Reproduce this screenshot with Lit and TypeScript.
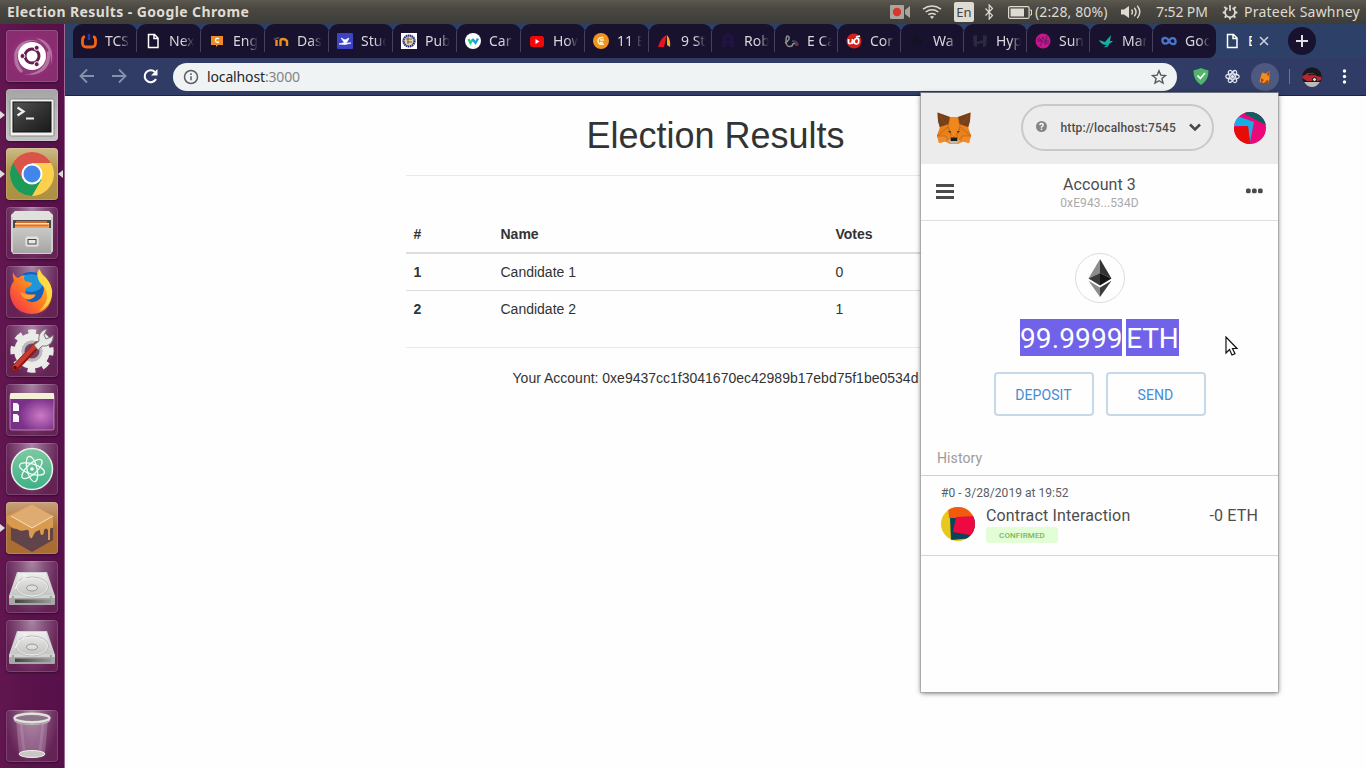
import { LitElement, html, css, svg, TemplateResult } from "lit";
import { customElement } from "lit/decorators.js";

type Art = TemplateResult;

/* Desktop panel ------------------------------------------------------- */

@customElement("top-panel")
class TopPanel extends LitElement {
  static styles = css`
    :host { display: flex; align-items: center; height: 24px; box-sizing: border-box; padding-left: 7px;
      background: linear-gradient(#5b584f, #4a4841 35%, #3d3c37); color: #dfdbd2;
      font: 14px/24px "Noto Sans", sans-serif; white-space: nowrap; }
    .title { font-weight: 700; font-size: 14px; letter-spacing: 0.4px; width: 883px; }
    svg { display: block; flex: none; }
    .lang { width: 20px; height: 20px; margin: 0 10px 0 12px; border-radius: 2px; background: #dfdbd2;
      color: #45433d; text-align: center; font-size: 13px; line-height: 20px; flex: none; }
    .wifi { margin-left: 12px; }
    .battery { margin-left: 13px; }
    .charge { width: 73px; margin: 0 13px 0 3px; letter-spacing: 0.12px; }
    .clock { width: 53px; margin: 0 13px 0 14px; letter-spacing: -0.12px; }
    .user { margin-left: 6px; letter-spacing: 0.23px; }
  `;
  render() {
    return html`
      <span class="title">Election Results - Google Chrome</span>
      <svg width="20" height="14" viewBox="0 0 20 14"><path d="M1 0h12a1 1 0 0 1 1 1v12a1 1 0 0 1-1 1H1a1 1 0 0 1-1-1V1a1 1 0 0 1 1-1zM15 5l5-4v12l-5-4z" fill="#a9a69f"/><circle cx="7" cy="7" r="4.2" fill="#d9352b"/></svg>
      <svg class="wifi" width="20" height="14" viewBox="0 0 20 14" fill="none" stroke="#dfdbd2" stroke-width="1.5"><path d="M1 4.2q9-6.6 18 0M3.6 7q6.400-4.600 12.800 0M6.300 9.700q3.700-2.600 7.400 0"/><path d="M10 14l-2-2.300q2-1.200 4 0z" fill="#dfdbd2" stroke="none"/></svg>
      <span class="lang">En</span>
      <svg width="11" height="16" viewBox="0 0 11 16" fill="none" stroke="#dfdbd2" stroke-width="1.200"><path d="M1.500 4.500l7 7L5.200 15V1l3.300 3.500-7 7"/></svg>
      <svg class="battery" width="24" height="13" viewBox="0 0 24 13"><rect x=".6" y=".6" width="20.500" height="11.800" rx="1.500" fill="none" stroke="#dfdbd2" stroke-width="1.200"/><path d="M2.500 2.500H16v8H2.500z" fill="#dfdbd2"/><path d="M22 4h1.500v5H22" fill="none" stroke="#dfdbd2"/></svg>
      <span class="charge">(2:28, 80%)</span>
      <svg width="21" height="14" viewBox="0 0 21 14"><path d="M0 4.500h3L8 1v12L3 9.500H0z" fill="#dfdbd2"/><path d="M10.500 4.500q2 2.500 0 5M13.300 2.700q3.500 4.300 0 8.600M16.300.800q5 6.200 0 12.400" fill="none" stroke="#dfdbd2" stroke-width="1.400"/></svg>
      <span class="clock">7:52 PM</span>
      <svg width="16" height="16" viewBox="0 0 16 16" fill="none" stroke="#dfdbd2"><path d="M5.500 4a5 5 0 1 0 5 0" stroke-width="1.700"/><path d="M8 1v6" stroke-width="1.700"/><path d="M4 4.500L2.300 2.800M12 4.500l1.700-1.700M3.200 8.500H.700M12.800 8.500h2.500M4.300 12l-1.600 1.600M11.700 12l1.600 1.600M8 13v2.500" stroke-width="1.900"/></svg>
      <span class="user">Prateek Sawhney</span>`;
  }
}

/* Launcher ------------------------------------------------------------ */

const drive: Art = svg`
  <path d="M11 11h30l8 24v2H3v-2z" fill="#d2d2d2"/><path d="M12 12h28l7 22H5z" fill="url(#silver)"/>
  <ellipse cx="26" cy="26" rx="16.500" ry="10" fill="none" stroke="#bbb"/><ellipse cx="26" cy="26" rx="15.500" ry="9" fill="none" stroke="#f3f3f3" stroke-width=".7"/>
  <ellipse cx="26" cy="27" rx="5.500" ry="3" fill="#ddd" stroke="#999"/><path d="M17 14l4 1-5 4M13 20l-4 8" fill="none" stroke="#f8f8f8"/>
  <path d="M3 37h46v6q0 1-1 1H4q-1 0-1-1z" fill="#a7a7a5"/><path d="M9 38.500h36V42H9z" fill="url(#slot)"/><circle cx="7" cy="36" r=".8" fill="#666"/><circle cx="45" cy="36" r=".8" fill="#666"/>`;

interface Tile { kind: string; running?: boolean; focused?: boolean; art: Art; }

const tiles: Tile[] = [
  { kind: "dash", art: svg`
    <path d="M8 26C9 12 24 5 38 14 28 8 16 11 12 24zM43 20c5 16-8 28-25 24 14 1 24-9 23-22zM15 43C4 33 8 19 17 12c-7 9-8 20 0 29zM30 8c14 2 19 14 15 27 1-12-4-21-15-27z" fill="#fff" fill-opacity=".32"/>
    <circle cx="26" cy="26" r="14" fill="#fff"/><circle cx="26" cy="26" r="7" fill="none" stroke="#6b1b50" stroke-width="3"/>
    <g stroke="#fff" stroke-width="1"><circle cx="16.500" cy="26" r="2.500" fill="#6b1b50"/><circle cx="30.700" cy="17.800" r="2.500" fill="#6b1b50"/><circle cx="30.700" cy="34.200" r="2.500" fill="#6b1b50"/></g>` },
  { kind: "silver", running: true, art: svg`
    <rect x="4" y="10" width="44" height="37" rx="1.500" fill="#f1f1ef" stroke="#888"/><rect x="7" y="13" width="38" height="30" fill="url(#screen)" stroke="#111"/>
    <path d="M11.500 18.500l6 4-6 4" fill="none" stroke="#eee" stroke-width="2.300"/><path d="M20 29.500h8" stroke="#eee" stroke-width="2"/>` },
  { kind: "gold", running: true, focused: true, art: svg`
    <circle cx="26" cy="26" r="22" fill="#fcd04b"/><path d="M6.950 15A22 22 0 0 0 26 48L35.500 31.500 26 26z" fill="#1c9a5a"/>
    <path d="M6.950 15A22 22 0 0 1 45.050 15H26V26l-9.500 5.500z" fill="#d9554a"/><circle cx="26" cy="26" r="10.500" fill="#fff"/><circle cx="26" cy="26" r="8.500" fill="#4286ea"/>` },
  { kind: "plain", art: svg`
    <path d="M9 4h34l4 4v8H5V8z" fill="#e0e0de"/><path d="M7 13h38v8H7z" fill="#4b4b49"/>
    <path d="M10 14h31v2H10z" fill="#d16a2e"/><path d="M9 16h34v5H9z" fill="#f0a25e"/><path d="M9 16.500h34" stroke="#fbe3c4"/><path d="M9 18.700h33" stroke="#dc6f2c" stroke-width="1.200"/>
    <path d="M5 10h2v11h38V10h2v34l-2 3H7l-2-3z" fill="#cfcfcd"/><path d="M7 21h38v25H7z" fill="url(#front)"/><rect x="19.500" y="29.500" width="13" height="10" rx="2" fill="#e3e3e1" stroke="#cfcfcd"/><rect x="22" y="32.500" width="8" height="4.500" fill="#e9e9e9" stroke="#444"/>` },
  { kind: "plain", art: svg`
    <circle cx="25" cy="24" r="18" fill="#1560bd"/><ellipse cx="25" cy="17" rx="12" ry="9" fill="#1f95dc"/>
    <path d="M7 6q1 4 5 6 3-3 7-3-2 3 0 6l7 2q0 3-6 5-2 4 1 6 4 1 7 0 3 1 0 3-4 4-9 2 5 5 12 2 6-3 7-12-1-6-5-9-4-5 0-11 2 5 7 9 7 8 6 17Q44 47 26 48 6 47 4 27 4 19 8 15 6 10 7 6z" fill="url(#fire)"/>
    <path d="M33 3q2 5 7 9 7 8 6 17-2 12-13 16 9-8 8-16-1-7-5-10-6-5-3-16z" fill="#ffdf45" opacity=".9"/><path d="M14 26q4 3 13 3 3 1 0 3-5 3-10-1z" fill="#ffb637" opacity=".7"/>` },
  { kind: "plain", art: svg`
    <circle cx="26" cy="26" r="18.700" fill="none" stroke="#e8e8e6" stroke-width="6" stroke-dasharray="7.500 7.190" transform="rotate(-101 26 26)"/>
    <circle cx="26" cy="26" r="14" fill="none" stroke="#ebebe9" stroke-width="7.500"/>
    <circle cx="26" cy="26" r="10.500" fill="#bdb9bb"/><circle cx="26" cy="26" r="7.500" fill="#724465"/>
    <path d="M9 43L31 20" stroke="#8f1712" stroke-width="7" stroke-linecap="round"/><path d="M8.700 42.300L30.500 19.500" stroke="#c93a32" stroke-width="4.500" stroke-linecap="round"/>
    <path d="M28 20l5-4c-1-6 2-11 8-12l-3 6 2 4 5-2 2-2c1 7-4 12-11 11l-4 4z" fill="#e7e7e5" stroke="#777"/><circle cx="9" cy="42.500" r="1.800" fill="#5c0c08"/>` },
  { kind: "plain", art: svg`
    <rect x="4" y="10" width="44" height="36" rx="2" fill="url(#desk)" stroke="#d9a5d6" stroke-width=".7"/><path d="M5 9h42q1 0 1 1v5H4v-5z" fill="#f2f0d6"/>
    <path d="M7 19h4l2 2v6H7zM7 30h4l2 2v6H7z" fill="#f6f6f6"/>` },
  { kind: "plain", art: svg`
    <circle cx="26" cy="26" r="20.500" fill="url(#atom)" stroke="#e6f2eb" stroke-width="1.500"/>
    <g fill="none" stroke="#effff7" stroke-width="1.300"><ellipse cx="26" cy="26" rx="13" ry="5" transform="rotate(17 26 26)"/><ellipse cx="26" cy="26" rx="13" ry="5" transform="rotate(77 26 26)"/><ellipse cx="26" cy="26" rx="13" ry="5" transform="rotate(137 26 26)"/></g><circle cx="26" cy="26" r="1.800" fill="#fff"/>` },
  { kind: "copper", running: true, art: svg`
    <path d="M26 2l21 12v24L26 50 5 38V14z" fill="#61444a"/><path d="M26 2l21 12v12q-3-1-3 2v10h-2V28q-2-3-4 0 0 5-2 5t-2-5q-5 1-6 4l-2 4q-3 1-3-5 0-4-3-3-6 2-9-1-4 0-6-2l-4-4V14z" fill="#d99a50"/>
    <path d="M26 2l21 12-21 12L5 14z" fill="#deac70"/><path d="M5 14l21 12 21-12" fill="none" stroke="#fae0ba"/>` },
  { kind: "plain", art: drive },
  { kind: "plain", art: drive },
  { kind: "plain trash", art: svg`
    <path d="M10 9l3 34q13 6 26 0l3-34z" fill="#c9a8c4" fill-opacity=".35"/><path d="M15 14l3 28M37 14l-3 28" stroke="#fff" stroke-opacity=".12" stroke-width="3"/>
    <ellipse cx="26" cy="44" rx="13" ry="3.500" fill="#c9c6c4" stroke="#eee"/>
    <path d="M8 8q0 6 18 6t18-6v3q-3 4-18 4T8 11z" fill="#b9b9b2"/><ellipse cx="26" cy="8" rx="17.500" ry="4.200" fill="#8d7489" stroke="#e2e1dc" stroke-width="2.500"/>` },
];

@customElement("side-launcher")
class SideLauncher extends LitElement {
  static styles = css`
    :host { display: flex; flex-direction: column; gap: 7px; width: 65px; height: 744px; box-sizing: border-box; padding: 6px 0 6px 0;
      background: linear-gradient(90deg, #611650, #5a124a 45%, #57104a); border-right: 1px solid #9d6a94; flex: none; }
    .defs { position: absolute; }
    .slot { display: flex; align-items: center; height: 52px; }
    .slot:last-child { margin-top: auto; }
    .left, .right { width: 6px; flex: none; display: flex; }
    .left i, .right i { width: 0; height: 0; border: 4px solid transparent; }
    .left i { border-left: 5px solid #ddd; border-right: 0; }
    .right i { border-right: 5px solid #ddd; border-left: 0; }
    .tile { width: 52px; height: 52px; border-radius: 4px; box-shadow: inset 0 0 0 1px #ffffff28, 0 1px 2px #0006; flex: none; }
    .tile svg { display: block; }
    .plain { background: radial-gradient(ellipse at 50% 0, #a986a4 0, #84517c 35%, transparent 75%), #652255; }
    .dash { background: radial-gradient(circle, #9d4b86, #8c2c72 60%, #82306d); }
    .silver { background: linear-gradient(#a4a4a4, #b9b9b9 50%, #c2c2c2); }
    .gold { background: linear-gradient(#cdbb87, #b1964c 40%, #ad9142); }
    .copper { background: linear-gradient(#c9a17c, #aa6e33 50%, #a96c33); }
  `;
  render() {
    return html`
      <svg class="defs" width="0" height="0"><defs>
        <linearGradient id="silver" x2="0" y2="1"><stop stop-color="#eee"/><stop offset="1" stop-color="#c5c5c3"/></linearGradient>
        <linearGradient id="front" x2="0" y2="1"><stop stop-color="#c9c9c7"/><stop offset="1" stop-color="#a5a5a3"/></linearGradient>
        <linearGradient id="slot"><stop stop-color="#444"/><stop offset="1" stop-color="#999"/></linearGradient>
        <linearGradient id="screen" x2="1" y2="1"><stop stop-color="#555"/><stop offset=".5" stop-color="#333"/><stop offset="1" stop-color="#191919"/></linearGradient>
        <linearGradient id="fire" x1="1" y1="0" x2="0" y2="1"><stop stop-color="#ffdc3d"/><stop offset=".5" stop-color="#ff8022"/><stop offset="1" stop-color="#f12651"/></linearGradient>
        <radialGradient id="desk" cx=".7" cy=".6"><stop stop-color="#cc7ac5"/><stop offset="1" stop-color="#793089"/></radialGradient>
        <linearGradient id="atom" x2="0" y2="1"><stop stop-color="#7fc9a0"/><stop offset="1" stop-color="#3fb087"/></linearGradient>
      </defs></svg>
      ${tiles.map((t) => html`<div class="slot">
        <span class="left">${t.running ? html`<i></i>` : ""}</span>
        <div class="tile ${t.kind}"><svg width="52" height="52" viewBox="0 0 52 52">${t.art}</svg></div>
        <span class="right">${t.focused ? html`<i></i>` : ""}</span>
      </div>`)}`;
  }
}

/* Browser tabs -------------------------------------------------------- */

const sheet: Art = svg`<path d="M3.500 1.500h6l3.500 3.500v9.500H3.500zM9 1.500V5.500h4" fill="none" stroke="#fff" stroke-width="1.500"/>`;

const tabs: { title: string; icon: Art }[] = [
  { title: "TCS", icon: svg`<path d="M4 3.500Q1.500 4 1.500 7v3q0 4 4 4h5q4 0 4-4V7q0-3-2.500-3.500" fill="none" stroke="#f26417" stroke-width="2.800"/><path d="M8 1v6" stroke="#2e369c" stroke-width="2.500"/>` },
  { title: "Next", icon: sheet },
  { title: "Eng", icon: svg`<path d="M2 3h12v9H9l-2 2v-2H2z" fill="#ef8b22"/><path d="M10 5.700q-3.500-1-3.500 1.600T10 9" fill="none" stroke="#fff" stroke-width="1.300"/>` },
  { title: "Das", icon: svg`<path d="M0 6l5-2 2 1-5 2z" fill="#555"/><path d="M3.500 7v6M7.500 13V8q0-2 2.500-2t4 2v5" fill="none" stroke="#ef8c22" stroke-width="2.400"/>` },
  { title: "Stud", icon: svg`<rect width="16" height="16" rx="1" fill="#3e42c4"/><path d="M7 9L4 5l4 2 4-2-2 4-3 1zM2 11l4-1h3l5 0-6 1.500z" stroke="#fff" stroke-width=".7" fill="#fff"/>` },
  { title: "Pub", icon: svg`<path d="M0 0h16v16H0z" fill="#fff"/><circle cx="8" cy="8" r="5.500" fill="#e3cfae" stroke="#272f74" stroke-width="2.200" stroke-dasharray="1.500 .5"/><path d="M5 6h6M6 9h5M7 4v7" stroke="#6c654d"/>` },
  { title: "Car", icon: svg`<circle cx="8" cy="8" r="8" fill="#fff"/><path d="M3.500 6l2 4L8 6" stroke="#1bd38d" stroke-width="2.300" fill="none"/><path d="M7.500 6l3 4 2.500-4.500" stroke="#16a1dc" stroke-width="2.300" fill="none"/>` },
  { title: "How", icon: svg`<rect x="1" y="3" width="14" height="11" rx="2.500" fill="#f20808"/><path d="M6.500 6l4 2.500-4 2.500z" fill="#fff"/>` },
  { title: "11 E", icon: svg`<circle cx="8" cy="8" r="8" fill="#f09420"/><path d="M10.500 4.500Q5 4 5 8t6 3M7 7h4M7 9.500h3" fill="none" stroke="#fff1c0" stroke-width="1.500"/>` },
  { title: "9 St", icon: svg`<path d="M1 14Q4 4 10 2L7 14z" fill="#e51420"/><path d="M10 2q4 5 3 12l-3-2z" fill="#f5ae22"/>` },
  { title: "Rob", icon: svg`<path d="M4 14V5q4-6 8 0v9M4 9h8" stroke="#211347" stroke-width="3" fill="none"/>` },
  { title: "E Ca", icon: svg`<path d="M2 10q5-3 4-6Q3 1 3 8t6 5q1-4 5-2" fill="none" stroke="#8d918f" stroke-width="1.500"/><path d="M9 8q5 0 6 4" fill="none" stroke="#40434e" stroke-width="2"/><path d="M12 10l3 0v3h-3z" fill="#a21642"/>` },
  { title: "Cor", icon: svg`<circle cx="8" cy="8" r="7.500" fill="#d42119"/><path d="M2.500 6v3q0 2 2 1.500 2 0 2-4.500v5M8 8q2-4 4.500-2 1 5-2 5Q8 11 8 8zM10 4l4-1" fill="none" stroke="#fff" stroke-width="1.700"/>` },
  { title: "Wa", icon: svg`<path d="M8 2v12M2 8h12M4 4l8 8M12 4l-8 8" stroke="#111324" stroke-width="1.800"/>` },
  { title: "Hyp", icon: svg`<path d="M1 3l4-1v12l-3-1zM15 3l-4-1v12l3-1zM5 9l6-2v3l-6 1z" fill="#2b2b3e"/>` },
  { title: "Sun", icon: svg`<circle cx="8" cy="8" r="7.500" fill="#c5178d"/><path d="M2 8h4l2-4 2 4h4M4 4l3 5-2 4M12 3l-2 9M2 6l12 5" fill="none" stroke="#65175f" stroke-width=".9"/>` },
  { title: "Mar", icon: svg`<path d="M1 7l6 2 6-7-1 6h3q-2 2-4 3-1 4-5 3l3-2Q3 12 1 7z" fill="#16aea4"/>` },
  { title: "Goo", icon: svg`<path d="M8 8C5 3 1 5 1.500 8S6 12 8 8s6-3.500 6.500 0S11 13 8 8z" fill="none" stroke="#4877c9" stroke-width="2.300"/>` },
];

@customElement("browser-tabs")
class BrowserTabs extends LitElement {
  static styles = css`
    :host { display: flex; height: 34px; box-sizing: border-box; padding-left: 8px; background: #2c4068;
      font: 14px/34px "Noto Sans", sans-serif; color: #d8d7dc; }
    .strip { display: grid; grid-template-columns: repeat(9, 64px) repeat(9, 63px); width: 1143px; flex: none; }
    .tab { display: flex; align-items: center; min-width: 0; height: 34px; box-sizing: border-box; padding-left: 8px; background: #19122f; border-radius: 9px 9px 0 0; }
    .tab:last-child { border-radius: 9px 9px 8px 0; }
    .tab:not(:last-child)::after { content: ""; width: 1px; height: 21px; margin-left: auto; background: #45415a; }
    .tab svg, .active svg { flex: none; display: block; }
    .tab span { width: 25px; margin-left: 8px; overflow: hidden; white-space: nowrap; letter-spacing: 0;
      -webkit-mask-image: linear-gradient(90deg, #000 55%, transparent); mask-image: linear-gradient(90deg, #000 55%, transparent); }
    .active { display: flex; align-items: center; width: 72px; box-sizing: border-box; padding-left: 8px; color: #fff; }
    .active b { font-weight: 400; width: 4px; margin: 0 6px 0 8px; overflow: hidden; }
    .plus { width: 28px; height: 28px; margin-top: 3px; border-radius: 50%; background: #19122f; }
  `;
  render() {
    return html`
      <div class="strip">${tabs.map((t) => html`<div class="tab"><svg width="16" height="16" viewBox="0 0 16 16">${t.icon}</svg><span>${t.title}</span></div>`)}</div>
      <div class="active"><svg width="16" height="16" viewBox="0 0 16 16">${sheet}</svg><b>E</b>
        <svg width="12" height="12" viewBox="0 0 12 12"><path d="M2 2l8 8M10 2l-8 8" stroke="#ccd1df" stroke-width="1.600"/></svg></div>
      <svg class="plus" viewBox="0 0 28 28"><path d="M14 8v12M8 14h12" stroke="#e0e0e4" stroke-width="2"/></svg>`;
  }
}

@customElement("browser-toolbar")
class BrowserToolbar extends LitElement {
  static styles = css`
    :host { display: flex; align-items: center; height: 38px; box-sizing: border-box; padding-left: 13px; background: #303c65; border-bottom: 1px solid #1c2548; }
    svg { display: block; flex: none; }
    .fwd { margin-left: 14px; }
    .reload { margin-left: 13px; }
    .omni { display: flex; align-items: center; width: 1004px; height: 28px; margin-left: 13px; box-sizing: border-box; padding: 0 10px; border-radius: 14px;
      background: #f0f3f3; font: 14px/28px "Noto Sans", sans-serif; color: #24262a; letter-spacing: -0.14px; }
    .omni span { margin: 0 auto 0 8px; }
    .omni i { font-style: normal; color: #80858b; }
    .shield { margin-left: 16px; }
    .atom { margin-left: 16px; }
    .fox { margin-left: 11px; }
    .rule { width: 1px; height: 15px; margin: 0 12px 0 10px; background: #6d7595; }
    .menu { margin-left: 20px; }
  `;
  render() {
    return html`
      <svg width="18" height="18" viewBox="0 0 18 18" fill="none" stroke="#8791ab" stroke-width="1.800"><path d="M16 8H3M9 1.500L2.500 8 9 14.500"/></svg>
      <svg class="fwd" width="18" height="18" viewBox="0 0 18 18" fill="none" stroke="#8791ab" stroke-width="1.800"><path d="M2 8h13M9 1.500L15.500 8 9 14.500"/></svg>
      <svg class="reload" width="19" height="18" viewBox="0 0 19 18"><path d="M15 11A6 6 0 1 1 14 4" fill="none" stroke="#fff" stroke-width="2.100"/><path d="M16.500 1v6.500H10z" fill="#fff"/></svg>
      <div class="omni">
        <svg width="16" height="16" viewBox="0 0 16 16" fill="none" stroke="#5a5e63" stroke-width="1.500"><circle cx="8" cy="8" r="6.500"/><path d="M8 7.200v4M8 4.300v1.600"/></svg>
        <span>localhost<i>:3000</i></span>
        <svg width="16" height="16" viewBox="0 0 16 16"><path d="M8 1.800l1.800 4.300 4.700.400-3.600 3 1.100 4.600L8 11.700l-4 2.400 1.100-4.600-3.600-3 4.700-.400z" fill="none" stroke="#55595e" stroke-width="1.400"/></svg>
      </div>
      <svg class="shield" width="16" height="17" viewBox="0 0 16 17"><path d="M8 0q4 2 7.500 2.200Q16 12 8 17 0 12 .500 2.200 4 2 8 0z" fill="#50b46c"/><path d="M4.500 7.500L7.300 10.500 12 5" fill="none" stroke="#fff" stroke-width="1.800"/></svg>
      <svg class="atom" width="15" height="15" viewBox="0 0 15 15" fill="none" stroke="#e4e9f1" stroke-width="1.200"><ellipse cx="7.500" cy="7.500" rx="6.700" ry="2.600"/><ellipse cx="7.500" cy="7.500" rx="6.700" ry="2.600" transform="rotate(60 7.500 7.500)"/><ellipse cx="7.500" cy="7.500" rx="6.700" ry="2.600" transform="rotate(120 7.500 7.500)"/><circle cx="7.500" cy="7.500" r="1" fill="#fff"/></svg>
      <svg class="fox" width="28" height="28" viewBox="0 0 28 28"><circle cx="14" cy="14" r="14" fill="#4e5980"/><path d="M18.500 8l-4 2.500-3.500-1-1.500 5L8.500 19l4 1h5l1-4z" fill="#f28b20"/><path d="M18.500 8.500l-3 2 2 3zM10 15l3 2-3 3zM16 17l2 1-1 2h-4z" fill="#a14b1a"/></svg>
      <span class="rule"></span>
      <svg width="20" height="20" viewBox="0 0 20 20"><circle cx="10" cy="10" r="9.800" fill="#17191d"/><path d="M2 15h16q-3 5-8 5t-8-5z" fill="#b8babb"/><path d="M.500 9q3-1 5-3h6l3 3 5 1-.500 3-3 1H5L.300 11z" fill="#ba2732"/><path d="M6 7.500h7" stroke="#421017" stroke-width="1.500"/><circle cx="12.500" cy="12.500" r="2" fill="#ddd" stroke="#111"/></svg>
      <svg class="menu" width="5" height="15" viewBox="0 0 5 15" fill="#fff"><circle cx="2.500" cy="2" r="1.700"/><circle cx="2.500" cy="7.500" r="1.700"/><circle cx="2.500" cy="13" r="1.700"/></svg>`;
  }
}

/* Page content -------------------------------------------------------- */

const candidates = [
  { id: 1, name: "Candidate 1", votes: 0 },
  { id: 2, name: "Candidate 2", votes: 1 },
];

@customElement("election-page")
class ElectionPage extends LitElement {
  static styles = css`
    :host { display: flow-root; width: 620px; margin-left: 340.5px; font: 14px/20px "Liberation Sans", Arial, sans-serif; color: #333; }
    h1 { margin: 20px 0 0; font-size: 36px; line-height: 39px; text-align: center; font-weight: 400; }
    hr { margin: 20px 0; border: 0; border-top: 1px solid #e9e9e9; }
    table { width: 620px; margin: 40px 0 20px; border-collapse: collapse; table-layout: fixed; }
    th, td { padding: 8px; text-align: left; border-top: 1px solid #ddd; line-height: 20px; }
    thead th { border-top: 0; border-bottom: 2px solid #ddd; }
    .id { width: 71px; }
    .name { width: 319px; }
    p { margin: 0; text-align: center; }
  `;
  render() {
    return html`
      <h1>Election Results</h1><hr />
      <table>
        <thead><tr><th class="id">#</th><th class="name">Name</th><th>Votes</th></tr></thead>
        <tbody>${candidates.map((c) => html`<tr><th>${c.id}</th><td>${c.name}</td><td>${c.votes}</td></tr>`)}</tbody>
      </table>
      <hr /><p>Your Account: 0xe9437cc1f3041670ec42989b17ebd75f1be0534d</p>`;
  }
}

/* Wallet popup -------------------------------------------------------- */

@customElement("wallet-popup")
class WalletPopup extends LitElement {
  static styles = css`
    :host { display: block; width: 357px; height: 599px; background: #fefefe; box-shadow: 0 0 0 1px #9f9f9f99, 0 1px 5px #0009; font-family: Roboto, sans-serif; color: #4d4d4d; }
    svg { display: block; flex: none; }
    header { display: flex; align-items: center; height: 71px; box-sizing: border-box; padding: 0 12px 2px 16px; background: #ececec; }
    .net { display: flex; align-items: center; width: 193px; height: 47px; margin: 0 20px 0 50px; box-sizing: border-box; padding: 0 11px 0 13px; border: 2px solid #c9c9c9; border-radius: 24px; font-size: 12px; font-weight: 500; white-space: nowrap; }
    .net svg { margin-bottom: 2px; }
    .net span { margin: 0 auto 0 13.500px; padding-top: 1px; letter-spacing: .15px; }
    .bar { display: flex; align-items: center; justify-content: space-between; height: 57px; box-sizing: border-box; padding: 0 15px 0 15px; border-bottom: 1px solid #dedede; }
    .bar svg { margin-bottom: 2px; }
    .who { text-align: center; font-size: 16px; line-height: 20px; padding-top: 1px; letter-spacing: .08px; }
    .who small { display: block; font-size: 12px; line-height: 16px; color: #aaa; }
    .balance { display: flex; flex-direction: column; align-items: center; padding-top: 32px; }
    .eth { width: 50px; height: 50px; box-sizing: border-box; border: 1px solid #ddd; border-radius: 50%; display: grid; place-items: center; }
    .amount { display: flex; gap: 4px; margin: 16px 0 16px; font-size: 28px; line-height: 39px; height: 37px; color: #fff; }
    .amount span { height: 37px; background: #7063ea; text-align: center; white-space: nowrap; }
    .num { width: 102px; letter-spacing: .12px; }
    .unit { width: 53px; letter-spacing: -.2px; }
    .actions { display: flex; gap: 12px; }
    .actions button { width: 100px; height: 44px; padding: 1px 0 0; border: 2px solid #c5d9e9; border-radius: 4px; background: #fefefe; color: #458bd8; font: 14px/40px Roboto, sans-serif; letter-spacing: .08px; }
    h2 { margin: 33px 0 0; padding: 0 16px; height: 26px; font-size: 14px; font-weight: 400; line-height: 18px; color: #9b9b9b; border-bottom: 1px solid #d0d0d0; letter-spacing: .1px; }
    .tx { height: 79px; padding: 0 20px; border-bottom: 1px solid #d6d6d6; }
    .when { padding-top: 9px; font-size: 12px; line-height: 16px; color: #5b5d67; letter-spacing: .03px; }
    .row { display: flex; padding-top: 5px; font-size: 16px; line-height: 20px; letter-spacing: .16px; }
    .row svg { margin: 1px 11px 0 0; }
    .amt { margin-left: auto; }
    .badge { width: 72px; height: 16px; margin-top: 1px; border-radius: 3px; background: #e3fdd6; color: #78b75b; font-size: 8px; font-weight: 500; line-height: 17px; text-align: center; letter-spacing: .1px; }
  `;
  render() {
    return html`
      <header>
        <svg width="34" height="32" viewBox="0 0 34 32">
          <path d="M.500.500L13 5h8L33.500.500 33 9l-2 7 3 7-2 8-6-1.500-5 2.500h-8l-5-2.500L2 31l-2-8 3-7L1 9z" fill="#f0881c"/>
          <path d="M.500.500L13 5l-2 10-8 1L1 9zM33.500.500L21 5l2 10 8 1 2-7z" fill="#76401b"/><path d="M3 4l8 11M31 4l-8 11" stroke="#945123" stroke-width=".6"/>
          <path d="M3 15l9-3 2 10-5 2-9 1zM31 15l-9-3-2 10 5 2 9 1z" fill="#e8811b"/><path d="M0 24h9l1 5-8 2zM34 24h-9l-1 5 8 2z" fill="#f28a26"/>
          <path d="M11 15L0 24h9l4 5 1-7zM23 15l11 9h-9l-4 5-1-7z" fill="none" stroke="#a85c21" stroke-width=".6"/>
          <path d="M13 5l-2 10 3 7 3 3 3-3 3-7-2-10M9 24l1 5M25 24l-1 5" fill="none" stroke="#ba671e" stroke-width=".5"/>
          <path d="M10.500 19.500l3-.500.500 2zM23.500 19.500l-3-.500-.500 2z" fill="#2d3033"/><path d="M11 28.500l3-2h6l3 2-3 3h-6z" fill="#cbb9a7"/><path d="M14 25.500h6l.500 3.500h-7z" fill="#1d1d1d"/>
        </svg>
        <div class="net">
          <svg width="11" height="11" viewBox="0 0 11 11"><circle cx="5.500" cy="5.500" r="5.500" fill="#858585"/><path d="M3.700 4.200Q4 2.500 5.500 2.500t1.700 1.400q0 1-1.700 2.100v.700M5.500 7.600v1.400" fill="none" stroke="#fff" stroke-width="1.400"/></svg>
          <span>http://localhost:7545</span>
          <svg width="12" height="8" viewBox="0 0 12 8"><path d="M1 1.500l5 5 5-5" fill="none" stroke="#484848" stroke-width="2.500"/></svg>
        </div>
        <svg width="32" height="32" viewBox="0 0 32 32"><defs><clipPath id="avatar"><circle cx="16" cy="16" r="16"/></clipPath></defs><g clip-path="url(#avatar)"><path d="M0 0h32v32H0z" fill="#ea087a"/><path d="M11 0h21v13L9 1z" fill="#0d6060"/><path d="M0 4l6 1 14 5-4 20-2-16H0z" fill="#19ade5"/><path d="M0 15l14-1 2 18H0z" fill="#e90b06"/></g></svg>
      </header>
      <div class="bar">
        <svg width="18" height="15" viewBox="0 0 18 15"><path d="M0 1.500h18M0 7.500h18M0 13.500h18" stroke="#4b4b4b" stroke-width="2.800"/></svg>
        <div class="who">Account 3<small>0xE943...534D</small></div>
        <svg width="18" height="6" viewBox="0 0 18 6" fill="#4b4b4b"><rect x="1" y=".500" width="4.700" height="4.700" rx="1.500"/><rect x="7" y=".500" width="4.700" height="4.700" rx="1.500"/><rect x="13" y=".500" width="4.700" height="4.700" rx="1.500"/></svg>
      </div>
      <div class="balance">
        <div class="eth"><svg width="24" height="38" viewBox="0 0 24 38"><path d="M12 0v14L.500 19.500z" fill="#8c8c8c"/><path d="M12 0v14l11.500 5.500z" fill="#343434"/><path d="M12 14v12.500L.500 19.500z" fill="#393939"/><path d="M12 14v12.500l11.500-7z" fill="#141414"/><path d="M.500 21.800L12 28.600V38z" fill="#8c8c8c"/><path d="M23.500 21.800L12 28.600V38z" fill="#3c3c3b"/></svg></div>
        <div class="amount"><span class="num">99.9999</span><span class="unit">ETH</span></div>
        <div class="actions"><button>DEPOSIT</button><button>SEND</button></div>
      </div>
      <h2>History</h2>
      <div class="tx">
        <div class="when">#0 - 3/28/2019 at 19:52</div>
        <div class="row">
          <svg width="34" height="34" viewBox="0 0 34 34"><defs><clipPath id="contract"><circle cx="17" cy="17" r="17"/></clipPath></defs><g clip-path="url(#contract)"><path d="M0 0h34v34H0z" fill="#e9c71b"/><path d="M7 0h27v10L8 11z" fill="#f05b10"/><path d="M9 11l25-1v21l-24 2z" fill="#094555"/><path d="M15 10l19-1v20l-22-4z" fill="#ed0942"/></g></svg>
          <div>Contract Interaction<div class="badge">CONFIRMED</div></div><span class="amt">-0 ETH</span>
        </div>
      </div>`;
  }
}

@customElement("app-root")
class AppRoot extends LitElement {
  static styles = css`
    :host { display: block; position: relative; width: 1366px; height: 768px; overflow: hidden; background: #fefefe; }
    .desktop { display: flex; }
    .window { flex: 1; min-width: 0; }
    wallet-popup { position: absolute; left: 921px; top: 93px; }
    .pointer { position: absolute; left: 1225px; top: 336px; }
  `;
  render() {
    return html`
      <top-panel></top-panel>
      <div class="desktop">
        <side-launcher></side-launcher>
        <div class="window"><browser-tabs></browser-tabs><browser-toolbar></browser-toolbar><election-page></election-page></div>
      </div>
      <wallet-popup></wallet-popup>
      <svg class="pointer" width="14" height="21" viewBox="0 0 14 21"><path d="M1 1v16l3.500-3.500L7 19l3-1.300-2.500-5.200H12z" fill="#fff" stroke="#111" stroke-width="1.200"/></svg>`;
  }
}
